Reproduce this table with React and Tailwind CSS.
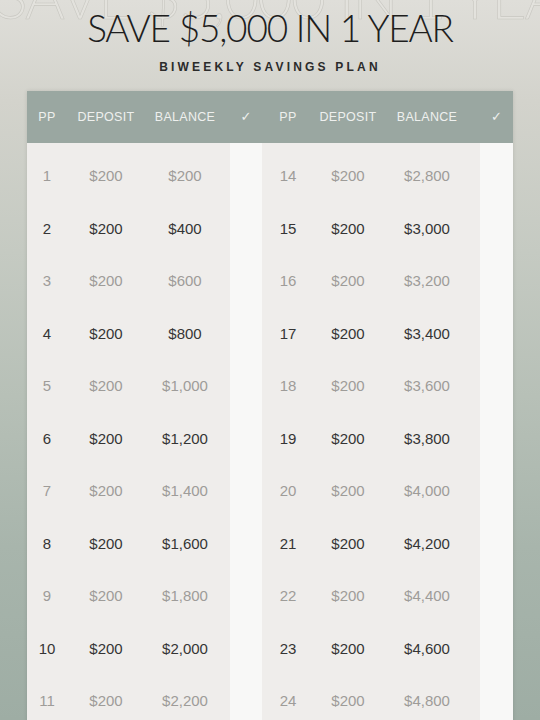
import React from 'react';

const rows = Array.from({ length: 13 }, (_, i) => i + 1);
const money = (n) => '$' + n.toLocaleString('en-US');

const HeaderHalf = ({ widths }) => (
  <div className="flex items-center h-full">
    <div className={`${widths[0]} text-center`}>PP</div>
    <div className={`${widths[1]} text-center`}>DEPOSIT</div>
    <div className={`${widths[2]} text-center`}>BALANCE</div>
    <div className={widths[3]} />
    <div className={`${widths[4]} text-center font-['DejaVu_Sans'] text-[13px]`}>✓</div>
  </div>
);

const Half = ({ start, widths }) => (
  <div className="flex">
    <div className="flex flex-col bg-[#efedeb] pt-[7px]">
      {rows.map((r) => {
        const pp = start + r - 1;
        const dark = r % 2 === 0;
        return (
          <div
            key={pp}
            className={`flex items-center h-[52.5px] ${dark ? 'text-[#353535]' : 'text-[#9e9c99] font-light'}`}
          >
            <div className={`${widths[0]} text-center`}>{pp}</div>
            <div className={`${widths[1]} text-center`}>$200</div>
            <div className={`${widths[2]} text-center`}>{money(pp * 200)}</div>
            <div className={widths[3]} />
          </div>
        );
      })}
    </div>
    <div className={`${widths[4]} bg-[#f8f8f7]`} />
  </div>
);

const leftW = ['w-[40px]', 'w-[78px]', 'w-[80px]', 'w-[5px]', 'w-[32px]'];
const rightW = ['w-[52px]', 'w-[68px]', 'w-[90px]', 'w-[8px]', 'w-[33px]'];

export default function App() {
  return (
    <div className="relative w-[540px] h-[720px] overflow-hidden bg-[linear-gradient(180deg,#dfded9_0%,#d3d3cc_14%,#c5cac2_35%,#b7c0b7_55%,#a8b5ac_76%,#9eada4_100%)]">
      {/* faded echo of the title, cut off at the top */}
      <div className="absolute left-[-5px] top-[-35px] whitespace-nowrap font-['Lato'] font-light text-[61px] leading-none tracking-[-2px] text-[#e3e2dd] [-webkit-text-stroke:0.6px_#c8c7c1]">
        SAVE $5,000 IN 1 YEAR
      </div>
      <div className="relative flex flex-col items-center">
        <h1 className="mt-[8px] font-['Lato'] font-light text-[37px] leading-[40px] tracking-[-1.2px] text-[#1e1e1e]">
          SAVE $5,000 IN 1 YEAR
        </h1>
        <p className="mt-[12px] font-['Liberation_Sans'] font-bold text-[12px] leading-[14px] tracking-[3.2px] text-[#2b2b2b]">
          BIWEEKLY SAVINGS PLAN
        </p>
      </div>
      <div className="relative ml-[27px] mt-[17px] w-[486px] shadow-[0_0_4px_rgba(0,0,0,0.12)]">
        <div className="flex h-[52px] bg-[#9aa7a1] text-[#eef0ee] text-[12.5px] font-['Liberation_Sans'] tracking-[0.3px]">
          <HeaderHalf widths={leftW} />
          <HeaderHalf widths={rightW} />
        </div>
        <div className="flex font-['Liberation_Sans'] text-[15px]">
          <Half start={1} widths={leftW} />
          <Half start={14} widths={rightW} />
        </div>
      </div>
    </div>
  );
}
